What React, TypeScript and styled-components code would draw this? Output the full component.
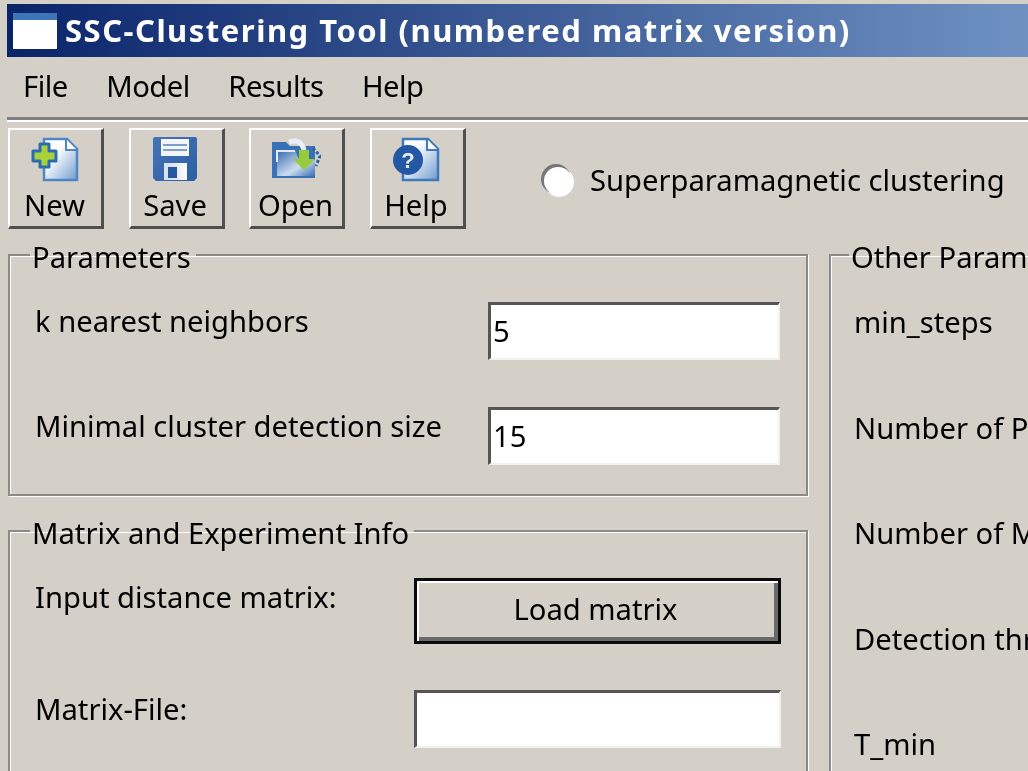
import React from 'react'
import styled, { createGlobalStyle } from 'styled-components'

const GlobalStyle = createGlobalStyle`
  html, body {
    background: #d4d0c8;
    margin: 0;
    overflow: hidden;
  }
`

const Screen = styled.div`
  background: #d4d0c8;
  box-sizing: border-box;
  color: #000;
  filter: blur(0.45px);
  font-family: 'Noto Sans', 'Liberation Sans', sans-serif;
  font-size: 29.2px;
  height: 771px;
  overflow: hidden;
  padding: 4px 0 0 7px;
  width: 1028px;
`

const TitleBar = styled.div`
  align-items: center;
  background: linear-gradient(90deg, #0a246a 0%, #6e91c2 100%);
  box-sizing: border-box;
  color: #fff;
  display: flex;
  font-size: 31px;
  font-weight: 700;
  gap: 8px;
  height: 53px;
  letter-spacing: 1.5px;
  padding: 0 0 2px 6px;
`

const TitleIcon = styled.div`
  background: #fff;
  border-top: 7px solid #3f74b8;
  box-sizing: border-box;
  height: 36px;
  margin-top: 2px;
  width: 44px;
`

const MenuBar = styled.div`
  align-items: center;
  border-bottom: 3px solid #808080;
  box-shadow: 0 2px 0 #fff;
  display: flex;
  gap: 38.5px;
  height: 58px;
  letter-spacing: -0.5px;
  padding: 0 0 2px 16px;
`

const ToolBar = styled.div`
  align-items: flex-start;
  box-sizing: border-box;
  display: flex;
  gap: 24.5px;
  height: 118px;
  padding: 8px 0 0 1px;
`

const ToolButton = styled.button`
  align-items: center;
  background: #d4d0c8;
  border: 0;
  border-bottom: 3px solid #4f4f4f;
  border-left: 2px solid #fff;
  border-right: 3px solid #4f4f4f;
  border-top: 2px solid #fff;
  box-sizing: border-box;
  color: #000;
  display: flex;
  flex: 0 0 96px;
  flex-direction: column;
  font: inherit;
  height: 101px;
  padding: 6px 2px 0 0;
`

const ToolIcon = styled.div`
  align-items: flex-start;
  display: flex;
  height: 50px;
  justify-content: center;
`

const ToolLabel = styled.span`
  line-height: 38px;
`

const RadioRow = styled.label`
  align-items: center;
  display: flex;
  gap: 18px;
  margin: 32px 0 0 54px;
  white-space: nowrap;
`

const RadioDot = styled.span`
  background: #fff;
  border-radius: 50%;
  box-shadow: -2px -2px 0 1px #777, 1px 1px 0 1px #fff;
  display: block;
  height: 28px;
  margin-top: 2px;
  width: 28px;
`

const Columns = styled.div`
  display: flex;
  gap: 21px;
  margin-left: 1px;
  width: 1220px;
`

const LeftColumn = styled.div`
  display: flex;
  flex: 0 0 800px;
  flex-direction: column;
  gap: 18px;
`

const Group = styled.fieldset`
  border: 2px solid #8c8a85;
  box-shadow: inset 1px 1px 0 #fff, 1px 1px 0 #fff;
  box-sizing: border-box;
  margin: 0;
  min-width: 0;
  padding: 0 25px;
`

const ParamGroup = styled(Group)`
  height: 258px;
`

const InfoGroup = styled(Group)`
  height: 300px;
`

const OtherGroup = styled(Group)`
  flex: 0 0 400px;
  height: 600px;
  padding-left: 23px;
  padding-right: 0;
`

const Legend = styled.legend`
  line-height: 30px;
  margin-left: -5px;
  padding: 4px 5px 0 2px;
`

const FieldRow = styled.div`
  align-items: flex-start;
  display: flex;
  justify-content: space-between;
  margin-bottom: 38px;
  padding-top: 9px;
`

const ParamList = styled.div`
  padding-top: 21px;
  width: 745px;
`

const InfoRow = styled(FieldRow)`
  margin-bottom: 46px;
  padding-top: 0;
`

const InfoList = styled.div`
  padding-top: 30px;
  width: 746px;
`

const FieldLabel = styled.span`
  line-height: 38px;
`

const TextField = styled.div<{ $width: number }>`
  background: #fff;
  border-bottom: 2px solid #f2f1ee;
  border-left: 3px solid #555;
  border-right: 2px solid #f2f1ee;
  border-top: 3px solid #555;
  box-sizing: border-box;
  height: 58px;
  line-height: 52px;
  padding-left: 2px;
  width: ${(props) => props.$width}px;
`

const LoadButton = styled.button`
  background: #d4d0c8;
  border: 3px solid #0a0a0a;
  box-shadow: inset 2px 2px 0 #fff, inset -4px -4px 0 #6a6a6a;
  box-sizing: border-box;
  color: #000;
  font: inherit;
  height: 66px;
  padding: 0 4px 5px 0;
  width: 367px;
`

const OtherList = styled.div`
  display: flex;
  flex-direction: column;
  gap: 67.5px;
  padding-top: 31px;
`

const OtherLabel = styled.div`
  line-height: 38px;
  white-space: nowrap;
`

function NewIcon() {
  return (
    <svg width="48" height="46" viewBox="0 0 48 46">
      <defs>
        <linearGradient id="pageNew" x1="0" y1="0" x2="1" y2="1">
          <stop offset="0.35" stopColor="#ffffff" />
          <stop offset="1" stopColor="#6f9bd1" />
        </linearGradient>
      </defs>
      <path d="M13 3H36L46 13V44H13Z" fill="url(#pageNew)" stroke="#4f86c6" strokeWidth="2.5" />
      <path d="M35 3V14H46" fill="#fff" stroke="#4f86c6" strokeWidth="2" />
      <path d="M9 8H18V15H25V25H18V31H9V25H2V15H9Z" fill="#a8d13c" stroke="#2c6cb0" strokeWidth="3" strokeLinejoin="round" />
    </svg>
  )
}

function SaveIcon() {
  return (
    <svg width="46" height="46" viewBox="0 0 46 46">
      <defs>
        <linearGradient id="diskBody" x1="0" y1="0" x2="1" y2="1">
          <stop offset="0" stopColor="#4474b8" />
          <stop offset="1" stopColor="#2d5fa6" />
        </linearGradient>
        <linearGradient id="diskSlot" x1="0" y1="0" x2="1" y2="0">
          <stop offset="0.3" stopColor="#d8e2ef" />
          <stop offset="1" stopColor="#ffffff" />
        </linearGradient>
      </defs>
      <path d="M3 1H43Q45 1 45 3V42L42 45H4L1 42V3Q1 1 3 1Z" fill="url(#diskBody)" />
      <rect x="9" y="3" width="28" height="17" fill="#f3f5f8" />
      <rect x="11" y="8" width="24" height="2" fill="#7d9fcb" />
      <rect x="11" y="13" width="24" height="2" fill="#7d9fcb" />
      <rect x="12" y="27" width="23" height="17" fill="url(#diskSlot)" />
      <rect x="16" y="31" width="9" height="11" fill="#24589f" />
    </svg>
  )
}

function OpenIcon() {
  return (
    <svg width="50" height="44" viewBox="0 0 50 44">
      <defs>
        <linearGradient id="folder" x1="0" y1="0" x2="1" y2="1">
          <stop offset="0" stopColor="#2e66ae" />
          <stop offset="0.6" stopColor="#cddcee" />
          <stop offset="1" stopColor="#3a70b6" />
        </linearGradient>
      </defs>
      <path d="M1 6H15L19 10H44V42H1Z" fill="#3a70b6" />
      <path d="M6 24V14H24L28 24H44V40H6Z" fill="url(#folder)" />
      <path d="M6 26V15H24" fill="none" stroke="#e3ecf6" strokeWidth="2" />
      <path d="M18 6Q30 2 33 14" fill="none" stroke="#e9eff7" strokeWidth="5" />
      <path d="M28 14H38V23H44L33 34L22 23H28Z" fill="#96cc3c" />
      <path d="M42 12L49 20L45 30" fill="none" stroke="#2c62a8" strokeWidth="3" strokeDasharray="3 2" />
    </svg>
  )
}

function HelpIcon() {
  return (
    <svg width="48" height="46" viewBox="0 0 48 46">
      <defs>
        <linearGradient id="pageHelp" x1="0" y1="0" x2="1" y2="1">
          <stop offset="0.3" stopColor="#ffffff" />
          <stop offset="1" stopColor="#6f9bd1" />
        </linearGradient>
      </defs>
      <path d="M11 3H36L46 13V44H11Z" fill="url(#pageHelp)" stroke="#3f78bd" strokeWidth="2.5" />
      <path d="M35 3V14H46" fill="#fff" stroke="#3f78bd" strokeWidth="2" />
      <circle cx="16" cy="24" r="15" fill="#2458a4" />
      <text x="16" y="32" fontFamily="'Liberation Sans', sans-serif" fontSize="22" fontWeight="700" fill="#e8eef7" textAnchor="middle">?</text>
    </svg>
  )
}

const tools = [
  { label: 'New', icon: <NewIcon /> },
  { label: 'Save', icon: <SaveIcon /> },
  { label: 'Open', icon: <OpenIcon /> },
  { label: 'Help', icon: <HelpIcon /> },
]

const otherParams = ['min_steps', 'Number of Permutations', 'Number of Mutations', 'Detection threshold', 'T_min']

function App() {
  return (
    <Screen>
      <GlobalStyle />
      <TitleBar>
        <TitleIcon />
        SSC-Clustering Tool (numbered matrix version)
      </TitleBar>
      <MenuBar>
        <span>File</span>
        <span>Model</span>
        <span>Results</span>
        <span>Help</span>
      </MenuBar>
      <ToolBar>
        {tools.map((tool) => (
          <ToolButton key={tool.label}>
            <ToolIcon>{tool.icon}</ToolIcon>
            <ToolLabel>{tool.label}</ToolLabel>
          </ToolButton>
        ))}
        <RadioRow>
          <RadioDot />
          Superparamagnetic clustering
        </RadioRow>
      </ToolBar>
      <Columns>
        <LeftColumn>
          <ParamGroup>
            <Legend>Parameters</Legend>
            <ParamList>
              <FieldRow>
                <FieldLabel>k nearest neighbors</FieldLabel>
                <TextField $width={292}>5</TextField>
              </FieldRow>
              <FieldRow>
                <FieldLabel>Minimal cluster detection size</FieldLabel>
                <TextField $width={292}>15</TextField>
              </FieldRow>
            </ParamList>
          </ParamGroup>
          <InfoGroup>
            <Legend>Matrix and Experiment Info</Legend>
            <InfoList>
              <InfoRow>
                <FieldLabel>Input distance matrix:</FieldLabel>
                <LoadButton>Load matrix</LoadButton>
              </InfoRow>
              <InfoRow>
                <FieldLabel>Matrix-File:</FieldLabel>
                <TextField $width={367} />
              </InfoRow>
            </InfoList>
          </InfoGroup>
        </LeftColumn>
        <OtherGroup>
          <Legend>Other Parameters</Legend>
          <OtherList>
            {otherParams.map((param) => (
              <OtherLabel key={param}>{param}</OtherLabel>
            ))}
          </OtherList>
        </OtherGroup>
      </Columns>
    </Screen>
  )
}

export default App
